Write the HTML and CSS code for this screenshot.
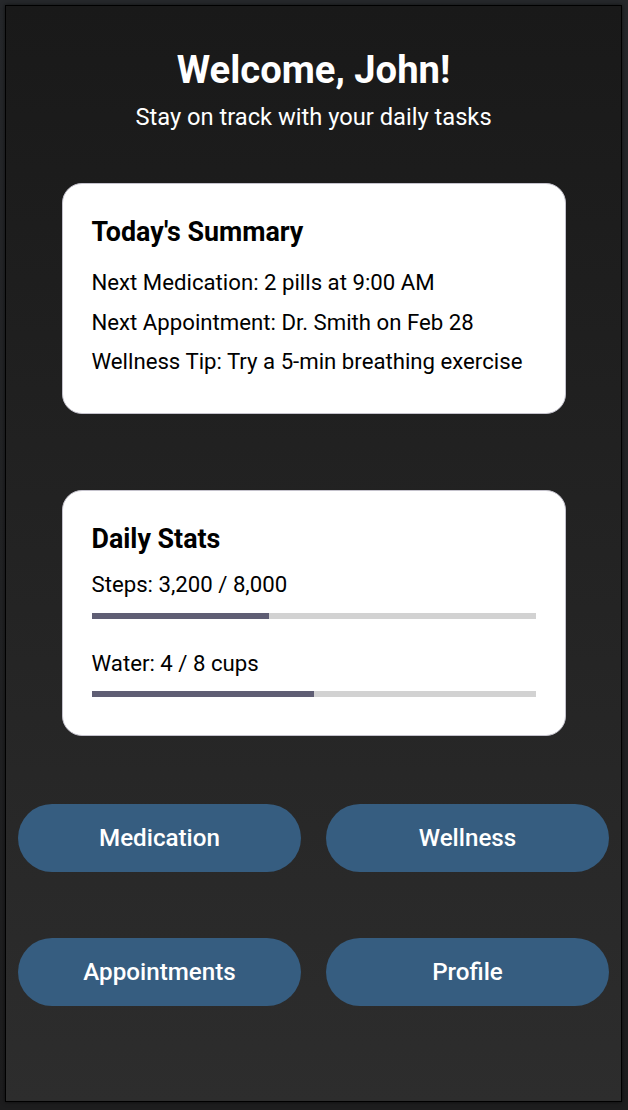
FILE: index.html
```html
<!DOCTYPE html>
<html lang="en">
<head>
<meta charset="utf-8">
<title>Dashboard</title>
<link rel="stylesheet" href="styles.css">
</head>
<body>
<div class="app">
  <header class="hero">
    <h1 class="hero-title">Welcome, John!</h1>
    <p class="hero-sub">Stay on track with your daily tasks</p>
  </header>

  <section class="card summary">
    <h2 class="card-title">Today's Summary</h2>
    <div class="summary-list">
      <p class="line">Next Medication: 2 pills at 9:00 AM</p>
      <p class="line">Next Appointment: Dr. Smith on Feb 28</p>
      <p class="line">Wellness Tip: Try a 5-min breathing exercise</p>
    </div>
  </section>

  <section class="card stats">
    <h2 class="card-title">Daily Stats</h2>
    <div class="stat">
      <p class="line">Steps: 3,200 / 8,000</p>
      <div class="bar"><div class="bar-fill" style="width:40%"></div></div>
    </div>
    <div class="stat">
      <p class="line">Water: 4 / 8 cups</p>
      <div class="bar"><div class="bar-fill" style="width:50%"></div></div>
    </div>
  </section>

  <nav class="actions">
    <button class="action">Medication</button>
    <button class="action">Wellness</button>
    <button class="action">Appointments</button>
    <button class="action">Profile</button>
  </nav>
</div>
</body>
</html>
```

FILE: styles.css
```css
* { box-sizing: border-box; }

html, body {
  margin: 0;
  padding: 0;
}

body {
  background: linear-gradient(180deg, #26282b 0%, #1d1d1e 100%);
  padding: 5px 6px 8px 5px;
  font-family: Roboto, "Liberation Sans", Arial, sans-serif;
  height: 1110px;
}

.app {
  height: 1097px;
  border: 1px solid #000;
  background: linear-gradient(180deg, #191919 0%, #2d2d2d 100%);
  box-shadow: 0 0 4px rgba(0,0,0,0.6);
  display: flex;
  flex-direction: column;
  align-items: center;
  padding: 42px 12px 0;
}

.hero {
  text-align: center;
  color: #fff;
}

.hero-title {
  margin: 0;
  font-size: 38.2px;
  font-weight: 700;
  line-height: 45px;
}

.hero-sub {
  margin: 10px 0 0;
  font-size: 23.7px;
  line-height: 28px;
}

.card {
  width: 504px;
  background: #fff;
  border: 1px solid #c4c2cc;
  border-radius: 20px;
  padding: 32px 29px 39px 29px;
  color: #000;
}

.summary { margin-top: 52px; }
.stats { margin-top: 76px; padding-bottom: 38px; }

.card-title {
  margin: 0;
  font-size: 26.8px;
  font-weight: 700;
  line-height: 32px;
}

.summary-list {
  margin-top: 21px;
  display: flex;
  flex-direction: column;
  gap: 13.5px;
}

.line {
  margin: 0;
  font-size: 22.2px;
  line-height: 26px;
}

.stat { margin-top: 16px; }
.stat + .stat { margin-top: 31px; }

.bar {
  margin-top: 15.5px;
  height: 6px;
  background: #d2d2d2;
}

.bar-fill {
  height: 100%;
  background: #5f5e74;
}

.actions {
  margin-top: 68px;
  width: 100%;
  display: grid;
  grid-template-columns: 1fr 1fr;
  column-gap: 25px;
  row-gap: 66px;
}

.action {
  height: 68px;
  border: none;
  border-radius: 34px;
  background: #365d80;
  color: #fff;
  font-family: Roboto, "Liberation Sans", Arial, sans-serif;
  font-size: 24.2px;
  font-weight: 500;
}
```
